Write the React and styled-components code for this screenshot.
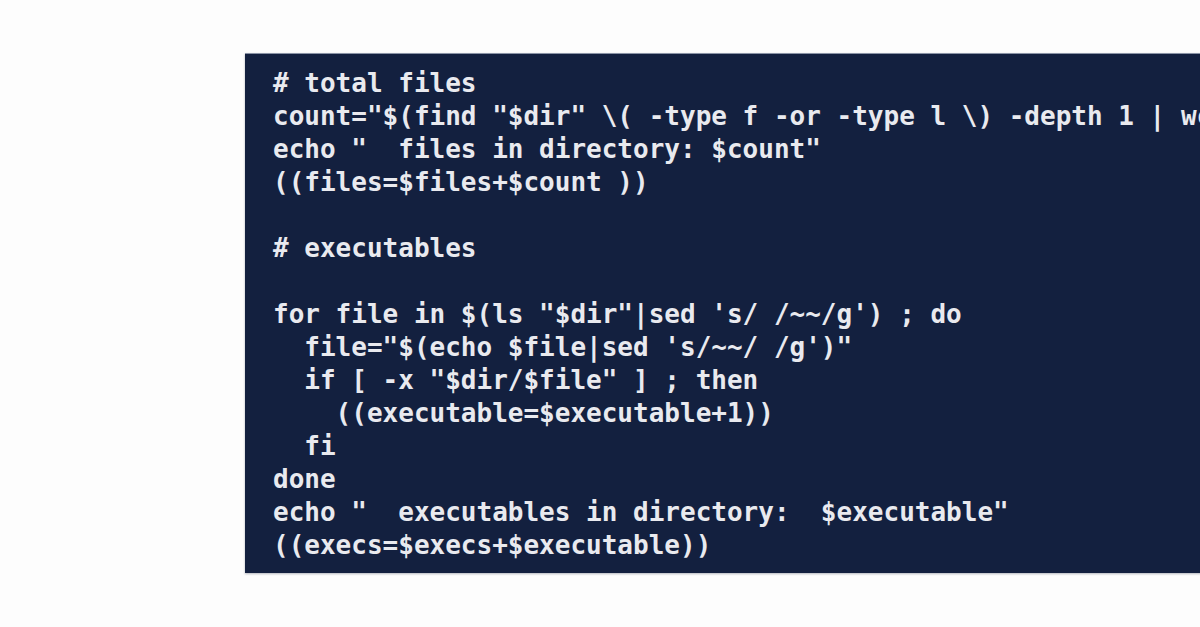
import React from "react";
import styled, { createGlobalStyle } from "styled-components";

const Global = createGlobalStyle`
  html, body { margin: 0; padding: 0; background: #fdfdfd; overflow: hidden; }
  #root { width: 1200px; height: 627px; }
`;

const Page = styled.div`
  width: 1200px;
  height: 627px;
  padding: 53px 0 0 245px;
  box-sizing: border-box;
  overflow: hidden;
  background: #fdfdfd;
`;

const CodeBlock = styled.pre`
  margin: 0;
  width: 1100px;
  box-sizing: border-box;
  padding: 13px 28px 11px 28px;
  background: #13203f;
  border-top: 1px solid #8a93a6;
  box-shadow: 0 1px 2px rgba(40, 50, 70, 0.35);
  color: #e9eaef;
  font-family: "DejaVu Sans Mono", "Liberation Mono", monospace;
  font-weight: bold;
  font-size: 26px;
  line-height: 33px;
  white-space: pre;
  overflow: hidden;
`;

const Line = styled.div`
  height: 33px;
`;

const lines = [
  "# total files",
  'count="$(find "$dir" \\( -type f -or -type l \\) -depth 1 | wc -l)"',
  'echo "  files in directory: $count"',
  "((files=$files+$count ))",
  "",
  "# executables",
  "",
  "for file in $(ls \"$dir\"|sed 's/ /~~/g') ; do",
  "  file=\"$(echo $file|sed 's/~~/ /g')\"",
  '  if [ -x "$dir/$file" ] ; then',
  "    ((executable=$executable+1))",
  "  fi",
  "done",
  'echo "  executables in directory:  $executable"',
  "((execs=$execs+$executable))",
];

export default function App() {
  return (
    <>
      <Global />
      <Page>
        <CodeBlock>
          {lines.map((l, i) => (
            <Line key={i}>{l}</Line>
          ))}
        </CodeBlock>
      </Page>
    </>
  );
}
